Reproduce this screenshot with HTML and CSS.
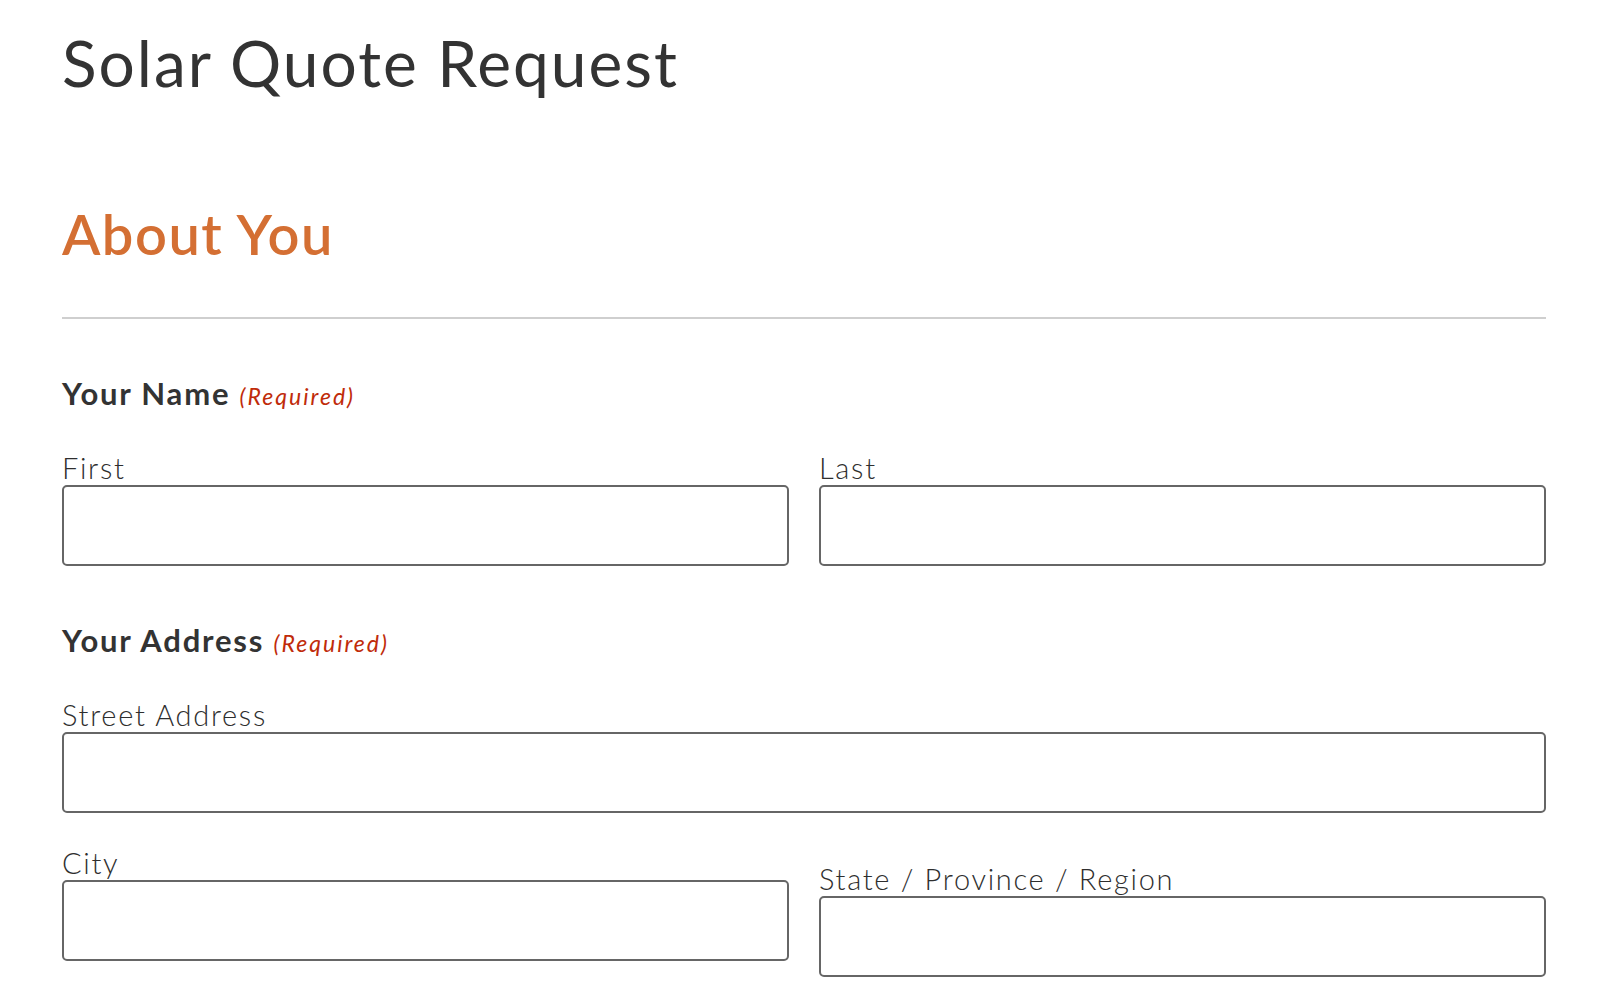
FILE: index.html
```html
<!DOCTYPE html>
<html lang="en">
<head>
<meta charset="utf-8">
<title>Solar Quote Request</title>
<link rel="stylesheet" href="styles.css">
</head>
<body>
<main class="page">
  <h1 class="page-title">Solar Quote Request</h1>
  <form class="quote-form">
    <h2 class="section-title">About You</h2>
    <hr class="section-rule">

    <fieldset class="field-group field-group--name">
      <legend class="group-label">Your Name <span class="required">(Required)</span></legend>
      <div class="row">
        <div class="sub-field">
          <label class="sub-label" for="first">First</label>
          <input class="text-input" id="first" type="text">
        </div>
        <div class="sub-field">
          <label class="sub-label" for="last">Last</label>
          <input class="text-input" id="last" type="text">
        </div>
      </div>
    </fieldset>

    <fieldset class="field-group field-group--address">
      <legend class="group-label">Your Address <span class="required">(Required)</span></legend>
      <div class="sub-field">
        <label class="sub-label" for="street">Street Address</label>
        <input class="text-input" id="street" type="text">
      </div>
      <div class="row row--spaced">
        <div class="sub-field">
          <label class="sub-label" for="city">City</label>
          <input class="text-input" id="city" type="text">
        </div>
        <div class="sub-field sub-field--lowered">
          <label class="sub-label" for="state">State / Province / Region</label>
          <input class="text-input" id="state" type="text">
        </div>
      </div>
      <div class="row row--spaced row--last">
        <div class="sub-field">
          <label class="sub-label" for="zip">ZIP / Postal Code</label>
          <input class="text-input" id="zip" type="text">
        </div>
        <div class="sub-field">
          <label class="sub-label" for="country">Country</label>
          <input class="text-input" id="country" type="text">
        </div>
      </div>
    </fieldset>
  </form>
</main>
</body>
</html>
```
FILE: styles.css
```css
* {
  box-sizing: border-box;
}

html, body {
  margin: 0;
  background: #ffffff;
}

body {
  font-family: "Lato", "Open Sans", "Liberation Sans", sans-serif;
  color: #333333;
}

.page {
  padding: 24px 56px 0 62px;
}

.page-title {
  margin: 0;
  font-size: 64px;
  line-height: 77px;
  font-weight: 400;
  letter-spacing: 2px;
  color: #333333;
}

.quote-form {
  margin: 0;
}

.section-title {
  margin: 99px 0 0;
  font-size: 56px;
  line-height: 67px;
  font-weight: 600;
  letter-spacing: 1.5px;
  color: #d46f33;
}

.section-rule {
  margin: 50px 0 0;
  border: 0;
  height: 2px;
  background: #cfcfcf;
}

.field-group {
  margin: 56px 0 0;
  padding: 0;
  border: 0;
  min-width: 0;
}

.group-label {
  display: block;
  float: left;
  width: 100%;
  padding: 0;
  margin: 0 0 36px;
  font-size: 31px;
  line-height: 37px;
  font-weight: 700;
  letter-spacing: 1.8px;
  color: #333333;
}

.required {
  font-size: 23px;
  font-style: italic;
  font-weight: 400;
  letter-spacing: 2px;
  color: #c02b0a;
}

.field-group--name .row,
.field-group--address > .sub-field {
  clear: both;
}

.row {
  display: grid;
  grid-template-columns: 1fr 1fr;
  column-gap: 30px;
  align-items: start;
}

.row--spaced {
  margin-top: 33px;
}

.row--last {
  margin-top: 34px;
}

.sub-field {
  display: flex;
  flex-direction: column;
  min-width: 0;
}

.sub-field--lowered {
  margin-top: 16px;
  margin-bottom: -16px;
}

.sub-label {
  font-size: 29px;
  line-height: 34px;
  font-weight: 300;
  letter-spacing: 1.7px;
  color: #2e2e2e;
}

.text-input {
  display: block;
  width: 100%;
  height: 81px;
  margin: 0;
  padding: 0 16px;
  border: 2px solid #666666;
  border-radius: 5px;
  background: #ffffff;
  font: inherit;
  font-size: 28px;
}
```
